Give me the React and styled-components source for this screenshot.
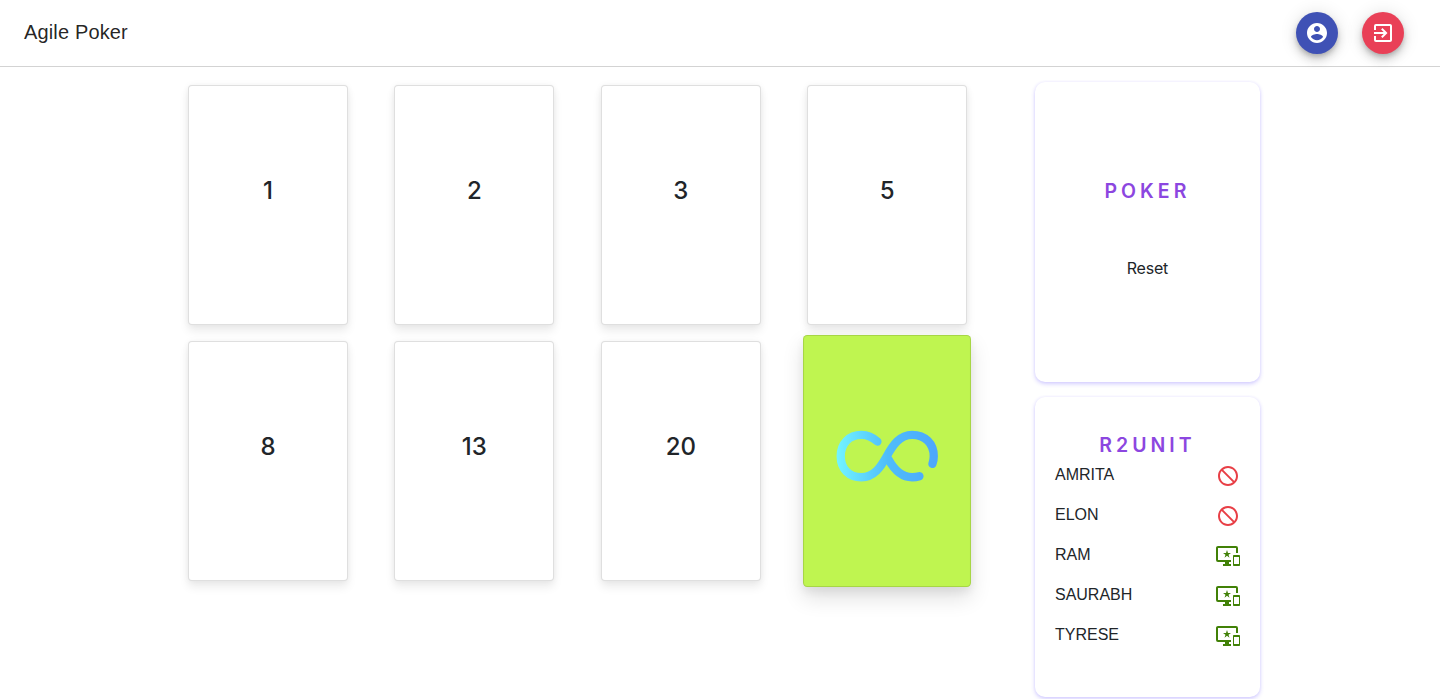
import React from "react";
import styled, { createGlobalStyle, css } from "styled-components";
import { MdExitToApp, MdNotInterested, MdImportantDevices } from "react-icons/md";

const GlobalStyle = createGlobalStyle`
  *, *::before, *::after { box-sizing: border-box; }
  body {
    margin: 0;
    height: 699px;
    overflow: hidden;
    background: #fff;
    color: #212529;
    font-family: Inter, "Liberation Sans", sans-serif;
    -webkit-font-smoothing: antialiased;
  }
`;

const Header = styled.header`
  display: flex;
  align-items: center;
  height: 67px;
  padding: 0 36px 0 24px;
  border-bottom: 1px solid #d3d3d3;
`;

const Brand = styled.h1`
  flex: 1;
  margin: 0;
  padding-bottom: 2px;
  color: rgba(0, 0, 0, 0.87);
  font: 400 20px/32px "Liberation Sans", sans-serif;
  letter-spacing: 0.0075em;
`;

const Actions = styled.nav`
  display: flex;
  gap: 24px;
`;

const RoundButton = styled.button`
  display: flex;
  align-items: center;
  justify-content: center;
  width: 42px;
  height: 42px;
  padding: 0;
  border: 0;
  border-radius: 50%;
  color: #fff;
  background: ${(p) => p.$color};
  box-shadow: 0 3px 5px -1px rgba(0, 0, 0, 0.2), 0 6px 10px 0 rgba(0, 0, 0, 0.14),
    0 1px 18px 0 rgba(0, 0, 0, 0.12);
`;

const Main = styled.main`
  display: flex;
  align-items: flex-start;
  padding: 15px 0 0 164.8px;
`;

const Deck = styled.section`
  display: grid;
  grid-template-columns: repeat(4, 206.4px);
  row-gap: 16px;
  justify-items: center;
  margin-top: 3px;
`;

const Card = styled.div`
  display: flex;
  align-items: center;
  justify-content: center;
  width: 160px;
  height: 240px;
  padding-bottom: 29px;
  border: 1px solid rgba(0, 0, 0, 0.125);
  border-radius: 4px;
  background: #fff;
  box-shadow: 0 6px 10px rgba(0, 0, 0, 0.08), 0 0 6px rgba(0, 0, 0, 0.05);
  font-size: 24px;
  font-weight: 500;
  line-height: 29px;
  ${(p) =>
    p.$selected &&
    css`
      padding-bottom: 10px;
      background: #bff550;
      transform: scale(1.05);
      box-shadow: 0 10px 20px rgba(0, 0, 0, 0.12), 0 4px 8px rgba(0, 0, 0, 0.06);
    `}
`;

const Sidebar = styled.aside`
  display: flex;
  flex-direction: column;
  gap: 15px;
  margin-left: 44.6px;
`;

const Panel = styled.section`
  display: flex;
  flex-direction: column;
  align-items: center;
  width: 225px;
  height: 300px;
  padding: ${(p) => p.$top}px 20px 0;
  border-radius: 10px;
  background: #fff;
  box-shadow: 0 2px 4px rgba(78, 55, 255, 0.24), 0 0 3px rgba(78, 55, 255, 0.08);
`;

const PanelTitle = styled.h2`
  margin: 0;
  color: #8c46e0;
  font-size: 19.5px;
  font-weight: 600;
  line-height: 24px;
  letter-spacing: 4px;
`;

const ResetButton = styled.button`
  margin-top: 53px;
  padding: 0;
  border: 0;
  background: none;
  color: #212529;
  font: 400 16px/24px Inter, sans-serif;
  letter-spacing: -0.2px;
`;

const Members = styled.ul`
  width: 100%;
  margin: 5px 0 0;
  padding: 0;
  list-style: none;
`;

const Member = styled.li`
  display: flex;
  align-items: flex-start;
  justify-content: space-between;
  height: 40px;
  font: 400 16px/26px "Liberation Sans", sans-serif;
`;

const StatusIcon = styled.span`
  display: flex;
  padding-top: 2px;
  color: ${(p) => (p.$voted ? "#418107" : "#e83f46")};
`;

const AccountIcon = () => (
  <svg width="24" height="24" viewBox="0 0 24 24" fill="currentColor">
    <path d="M12 2C6.48 2 2 6.48 2 12s4.48 10 10 10 10-4.48 10-10S17.52 2 12 2zm0 3c1.66 0 3 1.34 3 3s-1.34 3-3 3-3-1.34-3-3 1.34-3 3-3zm0 14.2c-2.5 0-4.71-1.28-6-3.22.03-1.99 4-3.08 6-3.08 1.99 0 5.97 1.09 6 3.08-1.29 1.94-3.5 3.22-6 3.22z" />
  </svg>
);

const InfinityMark = () => (
  <svg width="97.2" height="48.6" viewBox="46.5 45 306 153" fill="none" overflow="visible">
    <defs>
      <linearGradient id="mark" gradientUnits="userSpaceOnUse" x1="50" y1="0" x2="354" y2="0">
        <stop offset="0" stopColor="#72f4ff" />
        <stop offset="0.5" stopColor="#4fbdfb" />
        <stop offset="1" stopColor="#4da6fb" />
      </linearGradient>
    </defs>
    <g stroke="url(#mark)" strokeWidth="25" strokeLinecap="round" strokeLinejoin="round">
      <path d="M172 78C158 65 143 58 124 58C87 58 62 84 62 122C62 160 87 185 124 185C161 185 181 156 200 122C219 88 239 58 276 58C315 58 341 84 341 122Q341 134 337 145" />
      <path d="M205 131C223 164 245 185 276 185Q288 185 298 182" />
    </g>
  </svg>
);

const values = ["1", "2", "3", "5", "8", "13", "20", "infinity"];
const members = [
  { name: "AMRITA", voted: false },
  { name: "ELON", voted: false },
  { name: "RAM", voted: true },
  { name: "SAURABH", voted: true },
  { name: "TYRESE", voted: true },
];

export default function App() {
  return (
    <>
      <GlobalStyle />
      <Header>
        <Brand>Agile Poker</Brand>
        <Actions>
          <RoundButton $color="#3f51b5" aria-label="Account">
            <AccountIcon />
          </RoundButton>
          <RoundButton $color="#e94057" aria-label="Leave">
            <MdExitToApp size={24} />
          </RoundButton>
        </Actions>
      </Header>
      <Main>
        <Deck>
          {values.map((value) => (
            <Card key={value} $selected={value === "infinity"}>
              {value === "infinity" ? <InfinityMark /> : value}
            </Card>
          ))}
        </Deck>
        <Sidebar>
          <Panel $top={97}>
            <PanelTitle>POKER</PanelTitle>
            <ResetButton>Reset</ResetButton>
          </Panel>
          <Panel $top={36}>
            <PanelTitle>R2UNIT</PanelTitle>
            <Members>
              {members.map(({ name, voted }) => (
                <Member key={name}>
                  {name}
                  <StatusIcon $voted={voted}>
                    {voted ? <MdImportantDevices size={24} /> : <MdNotInterested size={24} />}
                  </StatusIcon>
                </Member>
              ))}
            </Members>
          </Panel>
        </Sidebar>
      </Main>
    </>
  );
}
